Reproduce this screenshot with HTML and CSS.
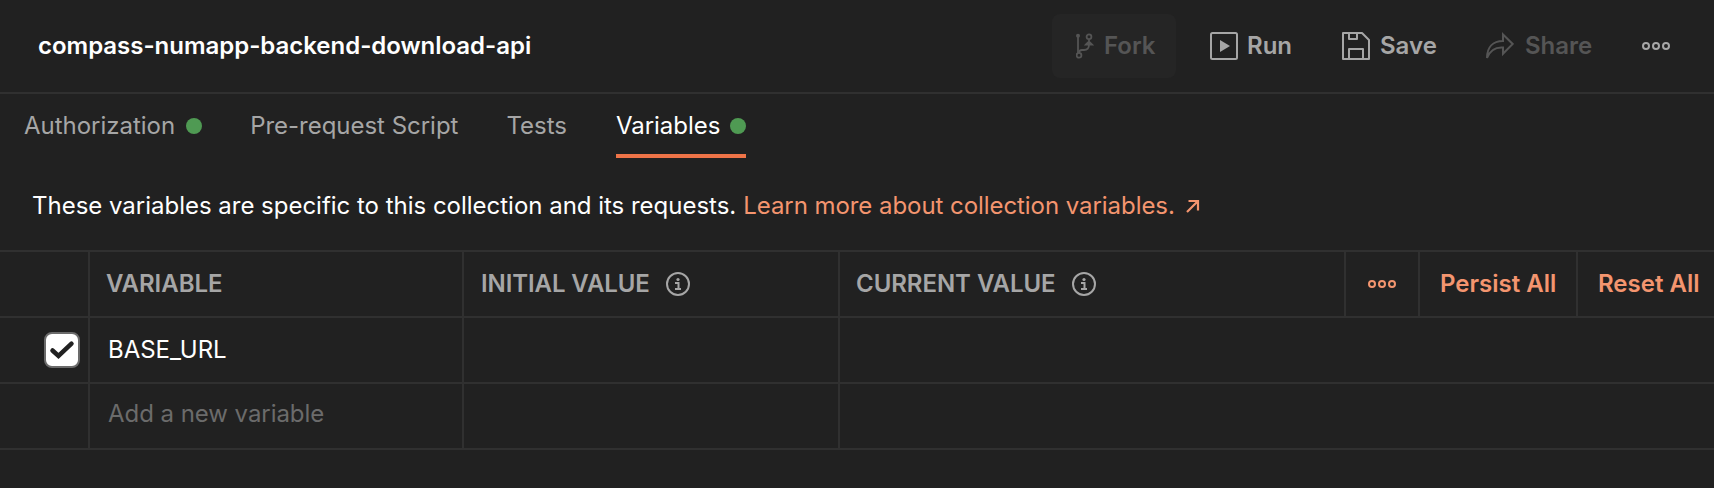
FILE: index.html
```html
<!DOCTYPE html>
<html lang="en">
<head>
<meta charset="utf-8">
<title>compass-numapp-backend-download-api</title>
<link rel="stylesheet" href="styles.css">
</head>
<body>
<header class="header">
  <h1 class="title">compass-numapp-backend-download-api</h1>
  <div class="actions">
    <button class="action action-fork">
      <svg class="icon-fork" width="18" height="28" viewBox="0 0 18 28" fill="none" stroke="currentColor" stroke-width="1.8"><circle cx="2" cy="3.8" r="2" fill="currentColor" stroke="none"/><path d="M2 4v17"/><circle cx="3" cy="23.3" r="2.4"/><circle cx="13" cy="4.8" r="2.4"/><path d="M13 7.200v5.300c0 3.500-2 5.500-5 5.500h-2c-1.800 0-3 1.200-3 3M10 12.500l3-3 3 3z"/></svg>
      <span>Fork</span>
    </button>
    <button class="action action-run">
      <svg width="28" height="28" viewBox="0 0 28 28" fill="none" stroke="currentColor" stroke-width="2"><rect x="1" y="1" width="26" height="26" rx="1.500"/><path d="M10 8v12l10-6z" fill="currentColor" stroke="none"/></svg>
      <span>Run</span>
    </button>
    <button class="action action-save">
      <svg width="28" height="28" viewBox="0 0 28 28" fill="none" stroke="currentColor" stroke-width="2" stroke-linejoin="round"><path d="M1 1h19l7 7v19H1zM7 1v6h8V1M7 27V17h14v10"/></svg>
      <span>Save</span>
    </button>
    <button class="action action-share">
      <svg width="28" height="28" viewBox="0 0 28 28" fill="none" stroke="currentColor" stroke-width="2"><path d="M17 2.500l9.700 9.500L17 21.800V15.500C9 15 4 18 1 26 1 15 7 9 17 9z"/></svg>
      <span>Share</span>
    </button>
    <button class="action action-more" aria-label="More">
      <svg width="28" height="8" viewBox="0 0 28 8" fill="none" stroke="currentColor" stroke-width="2"><circle cx="4" cy="4" r="3"/><circle cx="14" cy="4" r="3"/><circle cx="24" cy="4" r="3"/></svg>
    </button>
  </div>
</header>
<nav class="tabs">
  <a class="tab"><span>Authorization</span><i class="dot"></i></a>
  <a class="tab"><span>Pre-request Script</span></a>
  <a class="tab"><span>Tests</span></a>
  <a class="tab tab-active"><span>Variables</span><i class="dot"></i></a>
</nav>
<p class="description"><span>These variables are specific to this collection and its requests.</span> <a class="link">Learn more about collection variables.</a><svg class="external" width="14" height="14" viewBox="0 0 14 14" fill="none" stroke="currentColor" stroke-width="2.200"><path d="M1 13L12 2M2.500 2H12v9.500"/></svg></p>
<section class="table">
  <div class="row row-head">
    <div class="cell"></div>
    <div class="cell cell-variable">VARIABLE</div>
    <div class="cell cell-initial"><span>INITIAL VALUE</span><svg class="info" width="24" height="24" viewBox="0 0 24 24" fill="none" stroke="currentColor" stroke-width="2"><circle cx="12" cy="12" r="11"/><path d="M9 11h3.500v6M9 17h6"/><circle cx="12" cy="7.500" r="1.600" fill="currentColor" stroke="none"/></svg></div>
    <div class="cell cell-current"><span>CURRENT VALUE</span><svg class="info" width="24" height="24" viewBox="0 0 24 24" fill="none" stroke="currentColor" stroke-width="2"><circle cx="12" cy="12" r="11"/><path d="M9 11h3.500v6M9 17h6"/><circle cx="12" cy="7.500" r="1.600" fill="currentColor" stroke="none"/></svg></div>
    <div class="cell cell-action cell-more"><svg width="28" height="8" viewBox="0 0 28 8" fill="none" stroke="currentColor" stroke-width="2"><circle cx="4" cy="4" r="3"/><circle cx="14" cy="4" r="3"/><circle cx="24" cy="4" r="3"/></svg></div>
    <div class="cell cell-action">Persist All</div>
    <div class="cell cell-action">Reset All</div>
  </div>
  <div class="row">
    <div class="cell cell-check"><span class="checkbox"><svg width="26" height="20" viewBox="0 0 26 20" fill="none" stroke="#212121" stroke-width="4.500" stroke-linecap="round"><path d="M3.500 10.500l6 5.500L22.500 3.700"/></svg></span></div>
    <div class="cell cell-name">BASE_URL</div>
    <div class="cell"></div>
    <div class="cell"></div>
  </div>
  <div class="row row-new">
    <div class="cell"></div>
    <div class="cell cell-name">Add a new variable</div>
    <div class="cell"></div>
    <div class="cell"></div>
  </div>
</section>
</body>
</html>
```
FILE: styles.css
```css
* { box-sizing: border-box; }

body {
  margin: 0;
  width: 1714px;
  height: 488px;
  overflow: hidden;
  background: #212121;
  color: #fff;
  font-family: Inter, "Liberation Sans", sans-serif;
  font-size: 24px;
  line-height: 32px;
}

svg { display: block; flex: none; }

.header {
  display: flex;
  justify-content: space-between;
  align-items: flex-start;
  height: 94px;
  padding: 14px 20px 0 38px;
  border-bottom: 2px solid #303030;
}

.title {
  margin: 0;
  padding-top: 16px;
  font-size: 24px;
  line-height: 32px;
  font-weight: 600;
  letter-spacing: -0.02px;
}

.actions { display: flex; }

.action {
  display: flex;
  align-items: center;
  height: 64px;
  margin: 0;
  padding: 0 0 0 24px;
  border: 0;
  border-radius: 8px;
  background: none;
  color: #a6a6a6;
  font: 600 24px/32px Inter, "Liberation Sans", sans-serif;
}

.action span { margin-left: 10px; }
.action-fork { width: 124px; margin-right: 10px; background: #252525; color: #555; }
.action-run { width: 132px; }
.action-run span { margin-left: 9px; }
.action-save { width: 144px; }
.action-share { width: 156px; color: #555; }
.action-share span { margin-left: 11px; }
.action-more { width: 76px; }

.tabs {
  display: flex;
  gap: 48px;
  height: 66px;
  padding: 0 24px;
  letter-spacing: -0.02px;
}

.tab {
  display: flex;
  align-items: flex-start;
  gap: 11px;
  height: 64px;
  padding-top: 16px;
  color: #a6a6a6;
}

.tab-active { width: 130px; margin-left: 1px; justify-content: space-between; gap: 0; color: #fff; border-bottom: 4px solid #ef7448; }

.dot {
  width: 16px;
  height: 16px;
  margin-top: 8px;
  border-radius: 50%;
  background: #4f9a53;
}

.description {
  display: flex;
  align-items: center;
  margin: 0;
  height: 90px;
  padding: 2px 32px 0;
  letter-spacing: -0.015px;
}

.link { margin-left: 7px; color: #f4956f; letter-spacing: -0.06px; }
.external { margin-left: 11px; color: #f4956f; }

.table { border-top: 2px solid #303030; }

.row {
  display: grid;
  grid-template-columns: 90px 374px 376px 1fr;
  height: 66px;
  border-bottom: 2px solid #303030;
}

.row-head {
  grid-template-columns: 90px 374px 376px 506px 74px 158px 1fr;
  color: #a6a6a6;
  font-weight: 600;
}

.cell {
  display: flex;
  align-items: center;
  padding-left: 17px;
  border-right: 2px solid #303030;
  white-space: nowrap;
}

.cell:last-child { border-right: 0; }
.cell-variable, .cell-current { padding-left: 16px; letter-spacing: -0.05px; }
.cell-initial { letter-spacing: -0.09px; }
.cell-name { padding-left: 18px; letter-spacing: -0.05px; }
.cell-action { padding-left: 20px; color: #f4956f; }
.cell-more { padding-left: 22px; }
.cell-check { padding: 0 8px 0 0; justify-content: flex-end; }
.row-new { color: #6b6b6b; }
.row-new .cell-name { padding-bottom: 4px; }
.info { margin-left: 16px; }

.checkbox {
  display: flex;
  align-items: center;
  justify-content: center;
  width: 36px;
  height: 36px;
  border: 2px solid #6b6b6b;
  border-radius: 8px;
  background: #fff;
}
```
